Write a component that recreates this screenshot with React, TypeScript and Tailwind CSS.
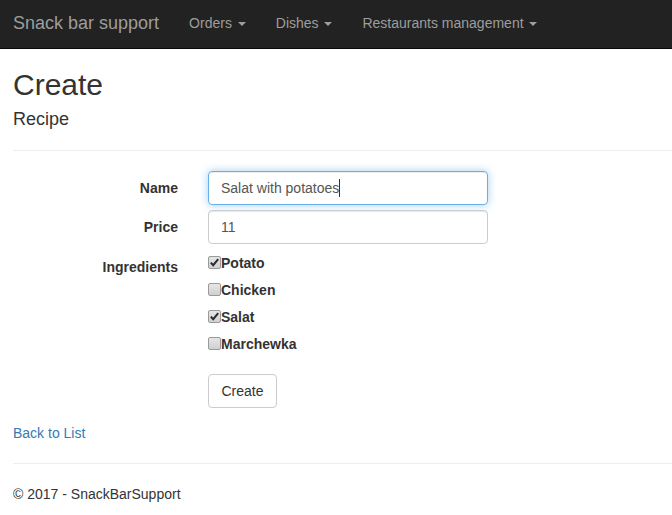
import React from "react";

const Caret = () => (
  <span className="inline-block ml-[2px] align-middle w-0 h-0 border-t-[4px] border-t-[#9d9d9d] border-x-[4px] border-x-transparent" />
);

const Check = ({ checked }: { checked: boolean }) => (
  <span className="inline-block w-[13px] h-[13px] rounded-[2px] border border-[#9a9a9a] bg-gradient-to-b from-[#e6e6e6] to-[#d0d0d0] relative shrink-0">
    {checked && (
      <svg viewBox="0 0 13 13" className="absolute left-[-1px] top-[-1px] w-[13px] h-[13px]">
        <path d="M2.8 6.6 L5.2 9.2 L10.2 3.2" fill="none" stroke="#2a2a2a" strokeWidth="2" />
      </svg>
    )}
  </span>
);

export default function App() {
  const ingredients = [
    { name: "Potato", checked: true },
    { name: "Chicken", checked: false },
    { name: "Salat", checked: true },
    { name: "Marchewka", checked: false },
  ];
  return (
    <div className="min-h-[515px] bg-white text-[#333] text-[14px] leading-[20px]" style={{ fontFamily: '"Liberation Sans", Arial, sans-serif' }}>
      <nav className="h-[49px] bg-[#222] border-b border-[#080808] flex items-center pl-[13px] pb-[2px]">
        <span className="text-[18px] leading-[20px] text-[#9d9d9d]">Snack bar support</span>
        <div className="flex ml-[15px]">
          <span className="px-[15px] text-[#9d9d9d] whitespace-pre">Orders <Caret /></span>
          <span className="px-[15px] text-[#9d9d9d] whitespace-pre">Dishes <Caret /></span>
          <span className="px-[15px] text-[#9d9d9d] whitespace-pre">Restaurants management <Caret /></span>
        </div>
      </nav>
      <div className="pl-[13px]">
        <h2 className="mt-[19px] text-[30px] leading-[33px]">Create</h2>
        <h4 className="mt-[8px] text-[18px] leading-[20px]">Recipe</h4>
        <hr className="mt-[21px] border-t border-[#eee]" />
        <div className="mt-[20px] flex flex-col">
          <div className="flex items-center h-[34px]">
            <label className="w-[165px] text-right font-bold">Name</label>
            <div className="ml-[30px] w-[280px] h-[34px] rounded-[4px] border border-[#66afe9] px-[12px] flex items-center text-[#555] shadow-[inset_0_1px_1px_rgba(0,0,0,0.075),0_0_8px_rgba(102,175,233,0.6)]">
              Salat with potatoes<span className="inline-block w-px h-[18px] bg-[#333]" />
            </div>
          </div>
          <div className="flex items-center h-[34px] mt-[5px]">
            <label className="w-[165px] text-right font-bold">Price</label>
            <div className="ml-[30px] w-[280px] h-[34px] rounded-[4px] border border-[#ccc] px-[12px] flex items-center text-[#555] shadow-[inset_0_1px_1px_rgba(0,0,0,0.075)]">
              11
            </div>
          </div>
          <div className="flex mt-[5px]">
            <label className="w-[165px] text-right font-bold pt-[8px]">Ingredients</label>
            <div className="ml-[30px] flex flex-col">
              {ingredients.map((i) => (
                <div key={i.name} className="h-[27px] flex items-center font-bold">
                  <Check checked={i.checked} />
                  <span>{i.name}</span>
                </div>
              ))}
              <button className="mt-[17px] w-[69px] h-[34px] rounded-[4px] border border-[#ccc] bg-white text-[#333]">Create</button>
            </div>
          </div>
        </div>
        <div className="mt-[15px]">
          <a className="text-[#337ab7]">Back to List</a>
        </div>
        <hr className="mt-[20px] border-t border-[#eee]" />
        <footer className="mt-[20px]">© 2017 - SnackBarSupport</footer>
      </div>
    </div>
  );
}
